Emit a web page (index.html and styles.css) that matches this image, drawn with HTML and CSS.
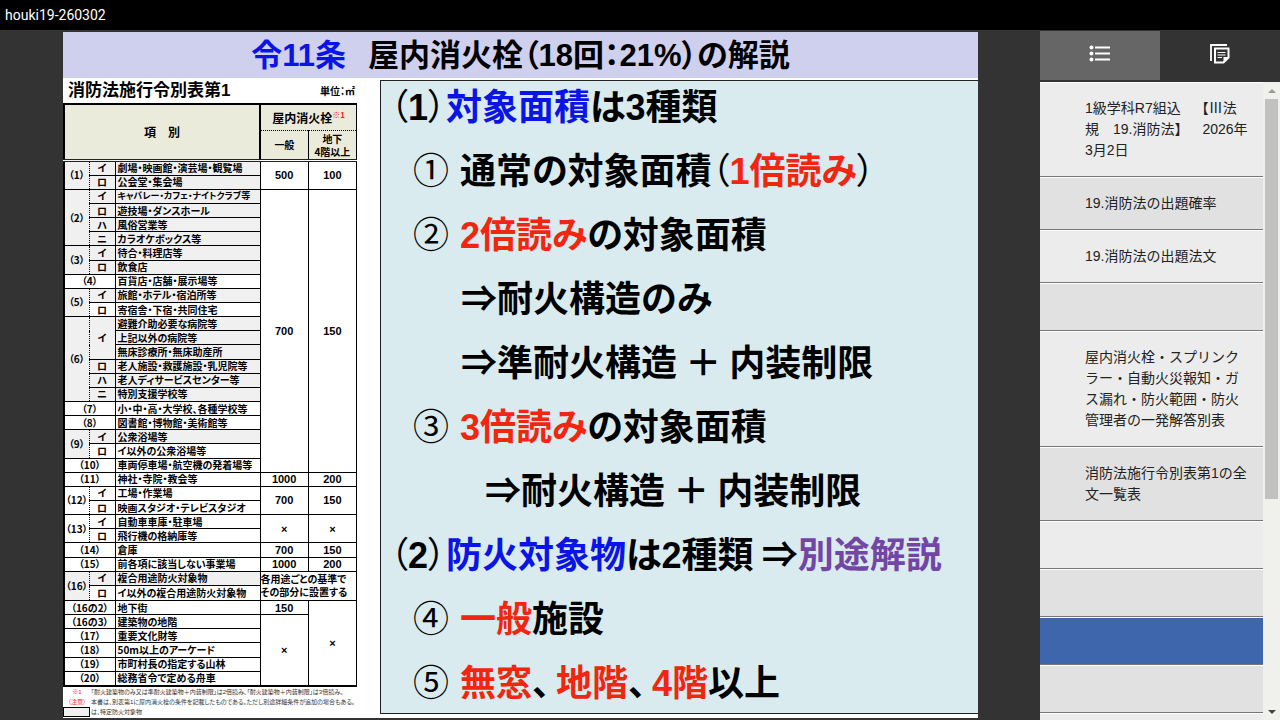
FILE: index.html
```html
<!DOCTYPE html>
<html lang="ja">
<head>
<meta charset="utf-8">
<meta name="viewport" content="width=device-width, initial-scale=1">
<title>houki19-260302</title>
<link rel="stylesheet" href="styles.css">
</head>
<body>
<header class="topbar">houki19-260302</header>
<div class="player">
  <main class="stage">
    <article class="slide">
      <h1 class="slide-title"><span class="blue">令11条</span>屋内消火栓（18回：21%）の解説</h1>
      <div class="slide-body">
        <section class="annex">
          <div class="annex-head"><h2>消防法施行令別表第1</h2><span class="unit">単位：㎡</span></div>
          <table class="grid">
            <colgroup><col class="c-no"><col class="c-sub"><col class="c-name"><col class="c-val"><col class="c-val"></colgroup>
            <thead>
              <tr class="head-top"><th colspan="3" rowspan="2">項　別</th><th colspan="2" class="main-head">屋内消火栓<sup>※1</sup></th></tr>
              <tr class="head-sub"><th>一般</th><th>地下<br>4階以上</th></tr>
            </thead>
            <tbody>
              <tr class="s"><th rowspan="2" class="no">（1）</th><td class="sub">イ</td><td>劇場・映画館・演芸場・観覧場</td><td class="v" rowspan="2">500</td><td class="v" rowspan="2">100</td></tr>
              <tr class="s"><td class="sub">ロ</td><td>公会堂・集会場</td></tr>
              <tr class="s"><th rowspan="4" class="no">（2）</th><td class="sub">イ</td><td class="kana">キャバレー・カフェ・ナイトクラブ等</td><td class="v" rowspan="20">700</td><td class="v" rowspan="20">150</td></tr>
              <tr class="s"><td class="sub">ロ</td><td>遊技場・ダンスホール</td></tr>
              <tr class="s"><td class="sub">ハ</td><td>風俗営業等</td></tr>
              <tr class="s"><td class="sub">ニ</td><td>カラオケボックス等</td></tr>
              <tr class="s"><th rowspan="2" class="no">（3）</th><td class="sub">イ</td><td>待合・料理店等</td></tr>
              <tr class="s"><td class="sub">ロ</td><td>飲食店</td></tr>
              <tr><th colspan="2">（4）</th><td>百貨店・店舗・展示場等</td></tr>
              <tr class="s"><th rowspan="2" class="no">（5）</th><td class="sub">イ</td><td>旅館・ホテル・宿泊所等</td></tr>
              <tr><td class="sub">ロ</td><td>寄宿舎・下宿・共同住宅</td></tr>
              <tr class="s"><th rowspan="6" class="no">（6）</th><td class="sub" rowspan="3">イ</td><td>避難介助必要な病院等</td></tr>
              <tr class="s"><td>上記以外の病院等</td></tr>
              <tr class="s"><td>無床診療所・無床助産所</td></tr>
              <tr class="s"><td class="sub">ロ</td><td>老人施設・救護施設・乳児院等</td></tr>
              <tr class="s"><td class="sub">ハ</td><td>老人ディサービスセンター等</td></tr>
              <tr class="s"><td class="sub">ニ</td><td>特別支援学校等</td></tr>
              <tr><th colspan="2">（7）</th><td>小・中・高・大学校、各種学校等</td></tr>
              <tr><th colspan="2">（8）</th><td>図書館・博物館・美術館等</td></tr>
              <tr class="s"><th rowspan="2" class="no">（9）</th><td class="sub">イ</td><td>公衆浴場等</td></tr>
              <tr><td class="sub">ロ</td><td>イ以外の公衆浴場等</td></tr>
              <tr><th colspan="2">（10）</th><td>車両停車場・航空機の発着場等</td></tr>
              <tr><th colspan="2">（11）</th><td>神社・寺院・教会等</td><td class="v">1000</td><td class="v">200</td></tr>
              <tr><th rowspan="2" class="no">（12）</th><td class="sub">イ</td><td>工場・作業場</td><td class="v" rowspan="2">700</td><td class="v" rowspan="2">150</td></tr>
              <tr><td class="sub">ロ</td><td>映画スタジオ・テレビスタジオ</td></tr>
              <tr><th rowspan="2" class="no">（13）</th><td class="sub">イ</td><td>自動車車庫・駐車場</td><td class="v" rowspan="2">×</td><td class="v" rowspan="2">×</td></tr>
              <tr><td class="sub">ロ</td><td>飛行機の格納庫等</td></tr>
              <tr><th colspan="2">（14）</th><td>倉庫</td><td class="v">700</td><td class="v">150</td></tr>
              <tr><th colspan="2">（15）</th><td>前各項に該当しない事業場</td><td class="v">1000</td><td class="v">200</td></tr>
              <tr class="s"><th rowspan="2" class="no">（16）</th><td class="sub">イ</td><td>複合用途防火対象物</td><td class="rule" rowspan="2" colspan="2">各用途ごとの基準で<br>その部分に設置する</td></tr>
              <tr><td class="sub">ロ</td><td>イ以外の複合用途防火対象物</td></tr>
              <tr><th colspan="2">（16の2）</th><td>地下街</td><td class="v">150</td><td class="v" rowspan="6">×</td></tr>
              <tr><th colspan="2">（16の3）</th><td>建築物の地階</td><td class="v" rowspan="5">×</td></tr>
              <tr><th colspan="2">（17）</th><td>重要文化財等</td></tr>
              <tr><th colspan="2">（18）</th><td>50m以上のアーケード</td></tr>
              <tr><th colspan="2">（19）</th><td>市町村長の指定する山林</td></tr>
              <tr><th colspan="2">（20）</th><td>総務省令で定める舟車</td></tr>
            </tbody>
          </table>
          <dl class="notes">
            <dt>※1</dt><dd>「耐火建築物のみ又は準耐火建築物＋内装制限」は2倍読み、「耐火建築物＋内装制限」は3倍読み。</dd>
            <dt>（注意）</dt><dd>本書は、別表第1に屋内消火栓の条件を記載したものである。ただし別途詳細条件が追加の場合もある。</dd>
            <dt class="swatch"></dt><dd>は、特定防火対象物</dd>
          </dl>
        </section>
        <section class="points">
          <p><span class="paren">（</span><span class="digit">1</span><span class="paren">）</span><span class="blue">対象面積</span>は<span class="digit">3</span>種類</p>
          <p class="item"><span class="num">①</span><span>通常の対象面積<span class="paren">（</span><span class="red"><span class="digit">1</span>倍読み</span><span class="paren">）</span></span></p>
          <p class="item"><span class="num">②</span><span><span class="red"><span class="digit">2</span>倍読み</span>の対象面積</span></p>
          <p class="arrow">⇒耐火構造のみ</p>
          <p class="arrow">⇒準耐火構造 ＋ 内装制限</p>
          <p class="item"><span class="num">③</span><span><span class="red"><span class="digit">3</span>倍読み</span>の対象面積</span></p>
          <p class="arrow deep">⇒耐火構造 ＋ 内装制限</p>
          <p><span class="paren">（</span><span class="digit">2</span><span class="paren">）</span><span class="blue">防火対象物</span>は<span class="digit">2</span>種類 ⇒<span class="purple">別途解説</span></p>
          <p class="item"><span class="num">④</span><span><span class="red">一般</span>施設</span></p>
          <p class="item"><span class="num">⑤</span><span><span class="red">無窓</span>、<span class="red next">地階</span>、<span class="red next"><span class="digit">4</span>階</span>以上</span></p>
        </section>
      </div>
    </article>
  </main>
  <aside class="sidebar">
    <div class="tabs">
      <button class="tab active" type="button" aria-label="目次">
        <svg width="22" height="18" viewBox="0 0 22 18" fill="#fff"><circle cx="2.500" cy="2.500" r="2"/><circle cx="2.500" cy="8.500" r="2"/><circle cx="2.500" cy="14.500" r="2"/><path d="M6 1.500h15v2H6zM6 7.500h15v2H6zM6 13.500h15v2H6z"/></svg>
      </button>
      <button class="tab" type="button" aria-label="ノート">
        <svg width="20" height="20" viewBox="0 0 20 20" fill="none" stroke="#fff" stroke-width="2"><path d="M1 17V1h16" stroke-width="1.800"/><path d="M5 4.500h13.500v9l-5 5H5z"/><path d="M7.500 8.500h8M7.500 11h8M7.500 13.500h4.500" stroke-width="1.200"/><path d="M18.500 13h-5v6z" fill="#fff" stroke="none"/></svg>
      </button>
    </div>
    <div class="outline">
      <nav class="list">
        <a href="#p1">1級学科R7組込　【Ⅲ法規　19.消防法】　2026年3月2日</a>
        <a href="#p2">19.消防法の出題確率</a>
        <a href="#p3">19.消防法の出題法文</a>
        <a href="#p4"></a>
        <a href="#p5">屋内消火栓・スプリンクラー・自動火災報知・ガス漏れ・防火範囲・防火管理者の一発解答別表</a>
        <a href="#p6">消防法施行令別表第1の全文一覧表</a>
        <a href="#p7"></a>
        <a href="#p8"></a>
        <a href="#p9" class="current" aria-current="page"></a>
        <a href="#p10"></a>
        <a href="#p11"></a>
      </nav>
      <div class="scroll">
        <span class="up"></span>
        <span class="track"><span class="thumb"></span></span>
        <span class="down"></span>
      </div>
    </div>
  </aside>
</div>
</body>
</html>
```
FILE: styles.css
```css
* { box-sizing: border-box; }
body {
  margin: 0;
  height: 100vh;
  display: flex;
  flex-direction: column;
  overflow: hidden;
  background: #333;
  font-family: "Liberation Sans", "Noto Sans CJK JP", sans-serif;
}
h1, h2, p, dl, dd { margin: 0; }
.topbar {
  flex: none;
  height: 30px;
  padding: 0 5px;
  background: #000;
  color: #fff;
  font: 14px/30px Roboto, "Liberation Sans", sans-serif;
}
.player { flex: 1; min-height: 0; display: flex; }
.stage { flex: 1; min-width: 0; display: flex; padding: 2px 62px 2px 63px; }
.slide {
  flex: 1;
  min-width: 0;
  display: flex;
  flex-direction: column;
  background: #fff;
  color: #000;
  font-feature-settings: "palt";
}
.blue { color: #0a14e6; }
.red { color: #f0260f; }
.purple { color: #7345a5; }

.slide-title {
  height: 46px;
  background: #cfcfee;
  text-align: center;
  font-size: 31px;
  line-height: 48px;
  white-space: nowrap;
}
.slide-title .blue { margin-right: 22px; }
.slide-body { flex: 1; min-height: 0; display: flex; padding: 2px 0 4px; }

.annex { width: 317px; flex: none; display: flex; flex-direction: column; }
.annex-head {
  flex: none;
  width: 294px;
  height: 23px;
  padding: 0 2px 2px 5px;
  display: flex;
  justify-content: space-between;
  align-items: center;
}
.annex-head h2 { font-size: 17px; line-height: 20px; }
.unit { font-size: 10px; font-weight: bold; }
.grid {
  flex: none;
  width: 294px;
  height: 584px;
  table-layout: fixed;
  border-collapse: collapse;
  border: 2px solid #000;
  border-right-width: 1px;
  font-family: "Noto Sans CJK JP", sans-serif;
  font-size: 10px;
  font-weight: bold;
  line-height: 12px;
}
.c-no { width: 25px; }
.c-sub { width: 26px; }
.c-name { width: 145px; }
.grid th, .grid td { padding: 0; border: 1px solid #000; white-space: nowrap; }
.grid td { padding-left: 2px; text-align: left; }
.grid td.kana { font-size: 9px; }
.grid thead th { background: #ebebdc; font-size: 10px; line-height: 13px; border-right-width: 2px; }
.grid thead th:last-child { border-right-width: 1px; }
.head-top { height: 26px; }
.head-sub { height: 30px; }
.grid thead th:first-child { font-size: 12px; }
.grid .head-sub th { border-top: 1px dotted #000; }
.grid .head-sub th:first-child { font-size: 10px; border-right-width: 1px; }
.grid thead .main-head { font-size: 12px; border-bottom: 1px dotted #000; }
.main-head sup { color: #f0260f; font-size: 8px; line-height: 8px; }
.grid thead { border-bottom: 3px double #222; }
.grid .s th, .grid .s td { background: #f0f0f0; }
.grid .no { border-right: 1px dotted #000; }
.grid td.sub { padding: 0; text-align: center; border-left: 1px dotted #000; }
.grid td.v, .grid .s td.v { padding: 0; text-align: center; background: #fff; font-family: "Liberation Sans", sans-serif; font-size: 11px; }
.grid td.rule, .grid .s td.rule {
  padding: 0;
  background: #fff;
  font-family: "Liberation Sans", "Noto Sans CJK JP", sans-serif;
  line-height: 13px;
}
.notes {
  display: grid;
  grid-template-columns: 28px 1fr;
  align-content: start;
  font-size: 6px;
  line-height: 10px;
  color: #333;
  white-space: nowrap;
}
.notes dt { text-align: center; color: #f0260f; }
.notes .swatch { width: 27px; height: 10px; border: 1px solid #000; background: #f0f0f0; }

.points {
  flex: 1;
  min-width: 0;
  display: flex;
  flex-direction: column;
  gap: 28px;
  padding: 5px 0 0 9px;
  border: 1px solid #222;
  border-right: 0;
  background: #d9ebef;
  font-family: "Noto Sans CJK JP", sans-serif;
  font-size: 36px;
  line-height: 36px;
  font-weight: bold;
  white-space: nowrap;
}
.points p { height: 36px; flex: none; }
.paren { font-weight: normal; }
.digit { font-family: "Liberation Sans", sans-serif; line-height: 1; }
.item { display: flex; padding-left: 23px; }
.num { width: 47px; flex: none; font-weight: normal; }
.arrow { padding-left: 71px; font-feature-settings: normal; }
.points .deep { padding-left: 95px; }
.next { margin-left: 6px; }

.sidebar { width: 240px; flex: none; display: flex; flex-direction: column; padding-top: 1px; }
.tabs { display: flex; height: 51px; flex: none; padding-bottom: 2px; }
.tab {
  flex: 1;
  padding: 0 0 4px;
  border: 0;
  background: #333;
  display: flex;
  align-items: center;
  justify-content: center;
}
.tab.active { background: #666; }
.outline { flex: 1; min-height: 0; display: flex; background: #f0f0ed; }
.list { flex: 1; overflow: hidden; }
.list a {
  display: block;
  min-height: 48px;
  padding: 15px 14px 15px 45px;
  border-top: 1px solid #fff;
  border-bottom: 1px solid #777;
  background: #ececec;
  color: #222;
  font-size: 14px;
  line-height: 21px;
  text-decoration: none;
  text-spacing-trim: space-all;
}
.list a:nth-child(even) { background: #e1e1e1; }
.list a.current { background: #3e66ad; }
.scroll { width: 17px; display: flex; flex-direction: column; align-items: center; padding: 7px 0 6px; }
.up, .down { border: 4px solid transparent; border-top: 0; border-bottom: 4px solid #999; }
.down { border-bottom: 0; border-top: 4px solid #444; }
.track { flex: 1; width: 13px; padding: 6px 0 14px; }
.thumb { display: block; height: 67%; background: #c1c1c1; }
```
